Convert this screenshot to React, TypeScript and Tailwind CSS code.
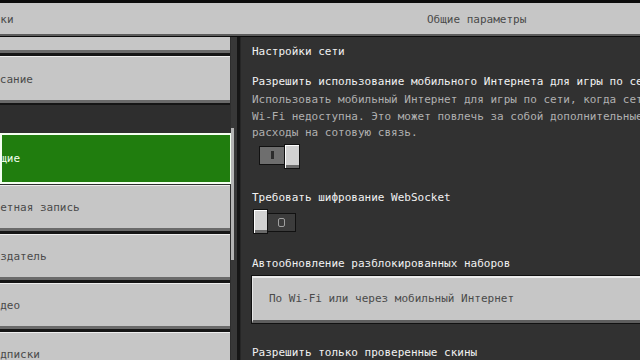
import React from "react";

function NavBtn({ children, hideClass }: { children: string; hideClass: string }) {
  return (
    <div className="h-[46px] w-[230px] shrink-0 bg-[#c6c6c6] border-t border-t-[#ededed] border-b-[3px] border-b-[#6a6a6a] pt-[2px] flex items-center overflow-hidden">
      <span className={`whitespace-nowrap text-[#4a4a4a] ${hideClass}`}>{children}</span>
    </div>
  );
}

function Gap({ h }: { h: string }) {
  return <div className={`${h} w-[230px] shrink-0 bg-[#151515]`} />;
}

function ToggleOn() {
  return (
    <div className="flex items-start ml-[7px] mt-[2px] h-[25px]">
      <div className="mt-[2px] w-[26px] h-[19px] bg-[#6e6e6e] border border-[#111] flex items-center justify-center">
        <div className="w-[3px] h-[8px] bg-[#2c2c2c]" />
      </div>
      <div className="-ml-[1px] w-[16px] h-[25px] bg-[#d2d2d2] border border-[#111] shadow-[inset_1px_1px_0_#ffffff,inset_0_-3px_0_#6b6b6b]" />
    </div>
  );
}

function ToggleOff() {
  return (
    <div className="flex items-start ml-[1px] mt-[3px] h-[25px]">
      <div className="w-[15px] h-[25px] bg-[#d2d2d2] border border-[#111] shadow-[inset_1px_1px_0_#ffffff,inset_0_-3px_0_#6b6b6b] z-10" />
      <div className="-ml-[1px] mt-[4px] w-[29px] h-[19px] bg-[#3c3c3c] border border-[#111] flex items-center justify-center">
        <div className="w-[7px] h-[9px] border-[1.5px] border-[#a0a0a0] rounded-[2px]" />
      </div>
    </div>
  );
}

export default function App() {
  return (
    <div className="w-[640px] h-[360px] overflow-hidden bg-black flex flex-col font-['DejaVu_Sans_Mono','Liberation_Mono',monospace] text-[11px] leading-[16px]">
      {/* top strip */}
      <div className="h-[3px] shrink-0 bg-[#0c0c0c]" />
      {/* header */}
      <div className="h-[31px] shrink-0 bg-[#c6c6c6] flex items-center pt-[3px]">
        <div className="w-[240px] overflow-hidden">
          <span className="whitespace-nowrap text-[#4a4a4a] -ml-[46px] inline-block">Настройки</span>
        </div>
        <div className="pl-[187px] whitespace-nowrap text-[#4a4a4a]">Общие параметры</div>
      </div>
      <div className="h-[2px] shrink-0 bg-[#5c5c5c]" />
      <div className="h-[1px] shrink-0 bg-[#0a0a0a]" />

      {/* body */}
      <div className="flex-1 flex min-h-0">
        {/* left nav */}
        <div className="w-[231px] shrink-0 bg-[#2e2e2e] flex flex-col overflow-hidden">
          <div className="h-[16px] w-[230px] shrink-0 bg-[#c6c6c6] border-b-[3px] border-b-[#6a6a6a]" />
          <Gap h="h-[3px]" />
          <div className="h-[47px] w-[230px] shrink-0 bg-[#c6c6c6] border-t border-t-[#ededed] border-b-[3px] border-b-[#6a6a6a] pt-[2px] flex items-center overflow-hidden">
            <span className="whitespace-nowrap text-[#4a4a4a] -ml-[20px]">Описание</span>
          </div>
          <Gap h="h-[2px]" />
          <div className="h-[28px] shrink-0" />
          <div className="h-[51px] w-[232px] shrink-0 bg-[#207d0e] border-2 border-[#f4fff0] flex items-center overflow-hidden">
            <span className="whitespace-nowrap text-[#f4fff0] -ml-[15px]">Общие</span>
          </div>
          <div className="h-[1px] shrink-0" />
          <NavBtn hideClass="-ml-[13px]">Учетная запись</NavBtn>
          <Gap h="h-[3px]" />
          <NavBtn hideClass="-ml-[13px]">Создатель</NavBtn>
          <Gap h="h-[3px]" />
          <NavBtn hideClass="-ml-[13px]">Видео</NavBtn>
          <Gap h="h-[3px]" />
          <NavBtn hideClass="-ml-[13px]">Подписки</NavBtn>
        </div>

        {/* scroll track */}
        <div className="w-[6px] shrink-0 bg-[#383838] flex flex-col">
          <div className="mt-[91px] w-[3px] h-[132px] bg-[#b4b4b4]" />
        </div>
        <div className="w-[3px] shrink-0 bg-[#161616]" />
        <div className="w-[1px] shrink-0 bg-[#262626]" />

        {/* right panel */}
        <div className="flex-1 min-w-0 bg-[#313131] pl-[11px] overflow-hidden flex flex-col whitespace-nowrap">
          <div className="mt-[7px] text-[#f2f2f2]">Настройки сети</div>

          <div className="mt-[14px] text-[#f2f2f2]">Разрешить использование мобильного Интернета для игры по сети</div>
          <div className="mt-[2px] text-[#b0b0b0] leading-[16.5px]">
            <div>Использовать мобильный Интернет для игры по сети, когда сеть</div>
            <div>Wi-Fi недоступна. Это может повлечь за собой дополнительные</div>
            <div>расходы на сотовую связь.</div>
          </div>
          <ToggleOn />

          <div className="mt-[21px] text-[#f2f2f2]">Требовать шифрование WebSocket</div>
          <ToggleOff />

          <div className="mt-[22px] text-[#f2f2f2]">Автообновление разблокированных наборов</div>
          <div className="mt-[3px] -ml-[1px] w-[420px] h-[49px] shrink-0 border border-[#111] flex flex-col">
            <div className="flex-1 bg-[#c6c6c6] border-t-2 border-t-[#ececec] border-l border-l-[#e6e6e6] border-b-[3px] border-b-[#5e5e5e] flex items-center pl-[16px] pt-[1px]">
              <span className="text-[#4a4a4a]">По Wi-Fi или через мобильный Интернет</span>
            </div>
          </div>

          <div className="mt-[21px] text-[#f2f2f2]">Разрешить только проверенные скины</div>
        </div>
      </div>
    </div>
  );
}
